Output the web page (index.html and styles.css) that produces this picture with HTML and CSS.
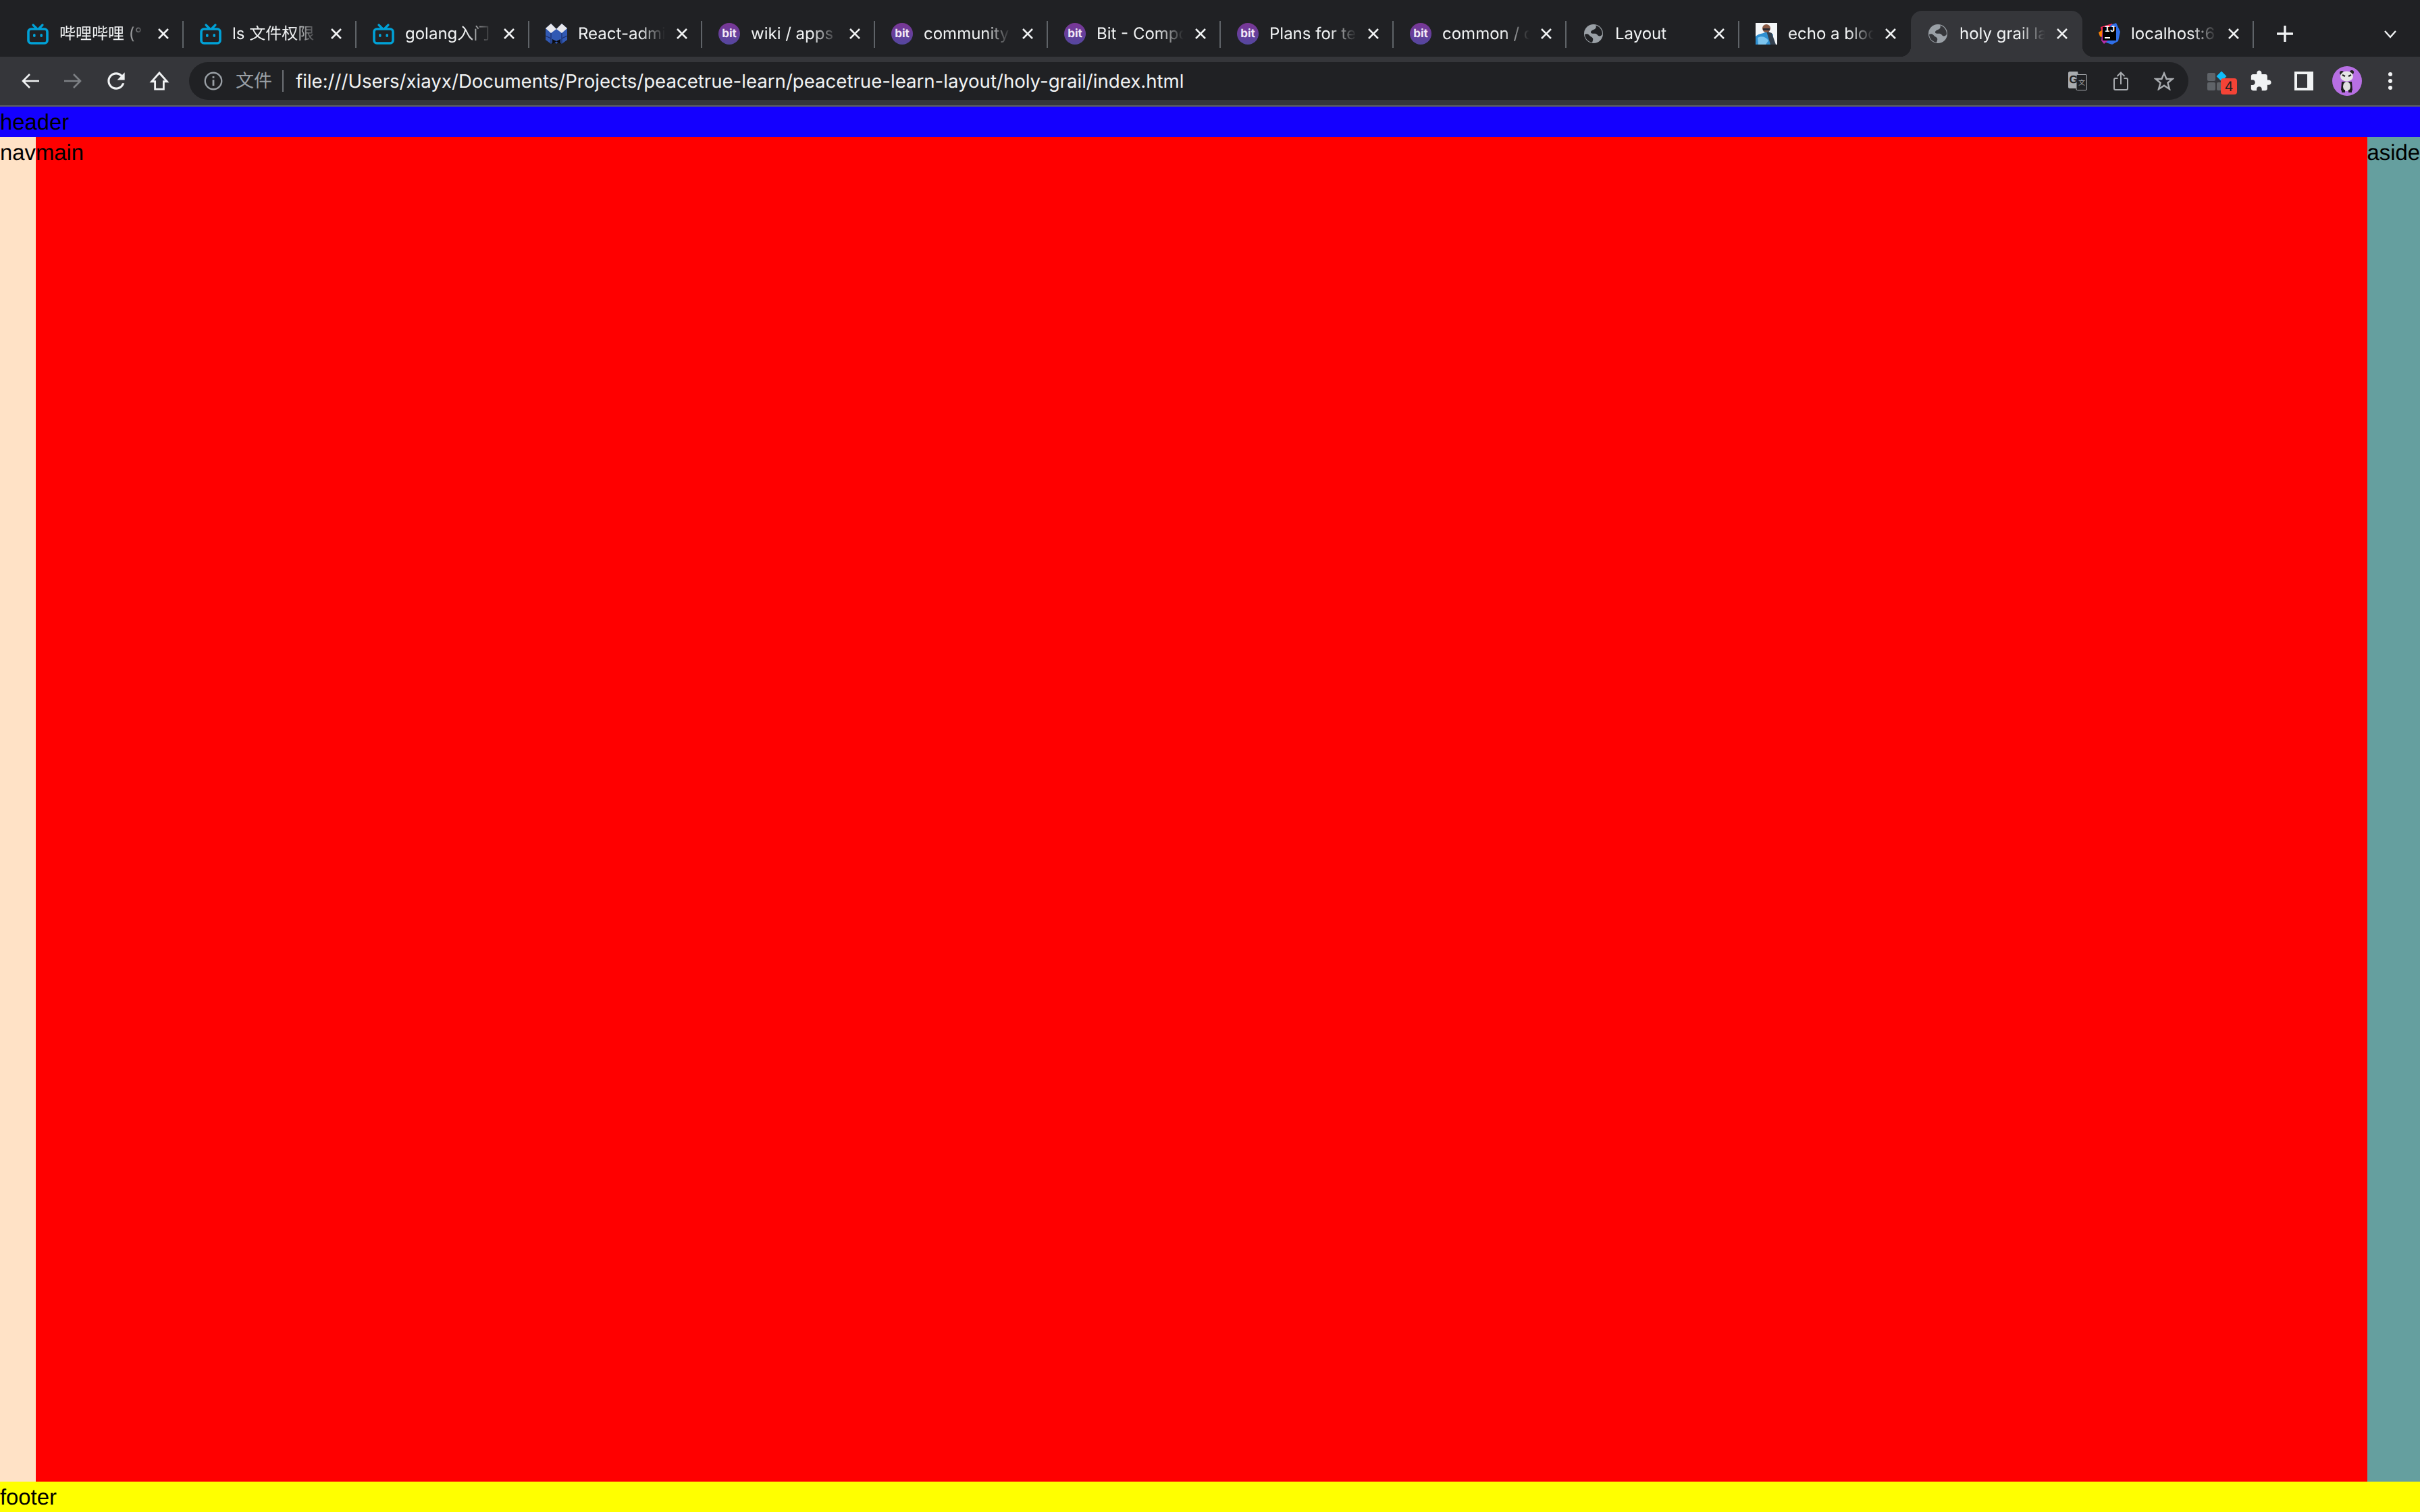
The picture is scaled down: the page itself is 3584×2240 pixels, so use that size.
FILE: index.html
```html
<!DOCTYPE html>
<html>
<head>
    <meta charset="utf-8" />
    <title>holy grail layout</title>
    <link rel="stylesheet" href="styles.css">
</head>
<body>
    <!-- 图标定义 -->
    <svg class="icon-defs" aria-hidden="true">
        <symbol id="iconClose" viewBox="0 0 20 20">
            <path d="M3 3L17 17M17 3L3 17" fill="none" stroke="currentColor" stroke-width="2.6"/>
        </symbol>
        <symbol id="iconBili" viewBox="0 0 32 32">
            <path d="M9 3L14 8M23 3L18 8" fill="none" stroke="#00a1d6" stroke-width="3.2" stroke-linecap="round"/>
            <rect x="2" y="9" width="28" height="21" rx="4" fill="none" stroke="#00a1d6" stroke-width="3.6"/>
            <rect x="9" y="16" width="3.6" height="5" rx="1.8" fill="#00a1d6"/>
            <rect x="19.4" y="16" width="3.6" height="5" rx="1.8" fill="#00a1d6"/>
        </symbol>
        <symbol id="iconGlobe" viewBox="0 0 28 28">
            <circle cx="14" cy="14" r="14" fill="#9aa0a6"/>
            <path d="M17 1.5C19 4 17 7 14 8C11 9 9 11 10.5 13C12 14.6 15 13 17.5 14C20 15 20.5 17.5 23 17.5C25 17.5 26.5 16 27 14.5C27 8 23 3 17 1.5Z" fill="currentColor"/>
            <path d="M1 15C3 13.5 6 14 7.5 16C9 18 11 18.5 12.5 20C14 21.5 13 24.5 12 27C6 26 1.5 21 1 15Z" fill="currentColor"/>
        </symbol>
    </svg>

    <div class="browser-chrome">
        <!-- 标签栏 -->
        <div class="tab-strip">
            <div class="tab">
                <svg class="favicon"><use href="#iconBili"/></svg>
                <span class="tab-title">哔哩哔哩 (°</span>
                <svg class="tab-close"><use href="#iconClose"/></svg>
            </div>
            <div class="tab">
                <svg class="favicon"><use href="#iconBili"/></svg>
                <span class="tab-title">ls 文件权限</span>
                <svg class="tab-close"><use href="#iconClose"/></svg>
            </div>
            <div class="tab">
                <svg class="favicon"><use href="#iconBili"/></svg>
                <span class="tab-title">golang入门</span>
                <svg class="tab-close"><use href="#iconClose"/></svg>
            </div>
            <div class="tab">
                <svg class="favicon" viewBox="0 0 32 32">
                    <path d="M0 8L8 1L16 9L24 1L32 8L32 25L24 31L20 27L16 31L12 27L8 31L0 25Z" fill="#3159b3"/>
                    <path d="M0 8L8 1L16 9L24 1L32 8L24 15L16 9L8 15Z" fill="#e8e8ec"/>
                    <path d="M8 15V31M24 15V31M0 19L8 23M32 19L24 23" stroke="#1c2f6c" stroke-width="1.2" fill="none"/>
                    <path d="M10 24L16 27L22 24V31L16 27.5L10 31Z" fill="#0b0b10"/>
                </svg>
                <span class="tab-title">React-admi</span>
                <svg class="tab-close"><use href="#iconClose"/></svg>
            </div>
            <div class="tab">
                <span class="favicon bit-icon">bit</span>
                <span class="tab-title">wiki / apps</span>
                <svg class="tab-close"><use href="#iconClose"/></svg>
            </div>
            <div class="tab">
                <span class="favicon bit-icon">bit</span>
                <span class="tab-title">community</span>
                <svg class="tab-close"><use href="#iconClose"/></svg>
            </div>
            <div class="tab">
                <span class="favicon bit-icon">bit</span>
                <span class="tab-title">Bit - Compo</span>
                <svg class="tab-close"><use href="#iconClose"/></svg>
            </div>
            <div class="tab">
                <span class="favicon bit-icon">bit</span>
                <span class="tab-title">Plans for te</span>
                <svg class="tab-close"><use href="#iconClose"/></svg>
            </div>
            <div class="tab">
                <span class="favicon bit-icon">bit</span>
                <span class="tab-title">common / c</span>
                <svg class="tab-close"><use href="#iconClose"/></svg>
            </div>
            <div class="tab">
                <svg class="favicon favicon-globe"><use href="#iconGlobe"/></svg>
                <span class="tab-title">Layout</span>
                <svg class="tab-close"><use href="#iconClose"/></svg>
            </div>
            <div class="tab tab-narrow tab-no-sep">
                <svg class="favicon" viewBox="0 0 32 32">
                    <rect width="32" height="32" fill="#f4f6f8"/>
                    <path d="M0 20C6 14 12 17 16 12L26 17L24 32H0Z" fill="#2f8fd0"/>
                    <path d="M3 22C8 19 15 20 19 26L15 32H4Z" fill="#7cc4ee"/>
                    <path d="M16 12L24 15L30 32H22Z" fill="#33404f"/>
                    <circle cx="16" cy="8" r="6" fill="#8a5a44"/>
                    <path d="M11 8H21V11H11Z" fill="#2b2b33"/>
                </svg>
                <span class="tab-title">echo a bloc</span>
                <svg class="tab-close"><use href="#iconClose"/></svg>
            </div>
            <div class="tab tab-narrow tab-active">
                <svg class="favicon favicon-globe"><use href="#iconGlobe"/></svg>
                <span class="tab-title">holy grail la</span>
                <svg class="tab-close"><use href="#iconClose"/></svg>
            </div>
            <div class="tab tab-narrow">
                <svg class="favicon" viewBox="0 0 32 32">
                    <path d="M3 6L20 1L24 10L8 28Z" fill="#fe2857"/>
                    <path d="M0 14L6 10L8 22L2 20Z" fill="#ff8100"/>
                    <path d="M18 3L26 0L32 13L29 27L20 32L8 28Z" fill="#2f6fe8"/>
                    <path d="M4 26L6 8L14 26L8 31Z" fill="#b62ea8"/>
                    <rect x="6" y="6" width="20" height="20" fill="#000"/>
                    <rect x="9" y="21" width="8" height="2" fill="#fff"/>
                </svg>
                <span class="ij-mark">IJ</span>
                <span class="tab-title">localhost:6</span>
                <svg class="tab-close"><use href="#iconClose"/></svg>
            </div>
            <svg class="new-tab" viewBox="0 0 24 24">
                <path d="M12 1V23M1 12H23" fill="none" stroke="#f1f3f4" stroke-width="3.4" stroke-linecap="round"/>
            </svg>
            <svg class="tab-search" viewBox="0 0 24 24">
                <path d="M4 8L12 17L20 8" fill="none" stroke="#f1f3f4" stroke-width="2.4"/>
            </svg>
        </div>

        <!-- 地址栏 -->
        <div class="toolbar">
            <div class="tool-btn">
                <svg class="nav-arrow" viewBox="0 0 27 24"><path d="M27 12H3M13 2L3 12L13 22" fill="none" stroke="#f1f3f4" stroke-width="2.6"/></svg>
            </div>
            <div class="tool-btn">
                <svg class="nav-arrow" viewBox="0 0 27 24"><path d="M0 12H24M14 2L24 12L14 22" fill="none" stroke="#7d8084" stroke-width="2.6"/></svg>
            </div>
            <div class="tool-btn">
                <svg class="reload-icon" viewBox="0 0 24 24"><path d="M17.65 6.35C16.2 4.9 14.21 4 12 4c-4.42 0-7.99 3.58-7.99 8s3.57 8 7.99 8c3.73 0 6.84-2.55 7.73-6h-2.08c-.82 2.33-3.04 4-5.65 4-3.31 0-6-2.69-6-6s2.69-6 6-6c1.66 0 3.14.69 4.22 1.78L13 11h7V4l-2.35 2.35z" fill="#f1f3f4"/></svg>
            </div>
            <div class="tool-btn">
                <svg class="tool-icon" viewBox="0 0 24 24"><path d="M12 3.5L4 12.5H7.5V20.5H16.5V12.5H20Z" fill="none" stroke="#f1f3f4" stroke-width="2" stroke-linejoin="miter"/></svg>
            </div>

            <div class="omnibox">
                <svg class="info-icon" viewBox="0 0 24 24">
                    <circle cx="12" cy="12" r="10.5" fill="none" stroke="#9aa0a6" stroke-width="2"/>
                    <path d="M12 10.5V18M12 6V8.4" stroke="#9aa0a6" stroke-width="2.4"/>
                </svg>
                <span class="scheme-chip">文件</span>
                <span class="url-text">file:///Users/xiayx/Documents/Projects/peacetrue-learn/peacetrue-learn-layout/holy-grail/index.html</span>
                <svg class="omni-icon omni-translate" viewBox="0 0 28 28">
                    <path d="M0 2C0 1 1 0 2 0H14L19 25H2C1 25 0 24 0 23Z" fill="#a9acb0"/>
                    <rect x="12" y="4.5" width="15.5" height="23" rx="1.5" fill="#202124" stroke="#a9acb0" stroke-width="1"/>
                    <text class="translate-g" x="1.5" y="17">G</text>
                    <text class="translate-x" x="15" y="20">文</text>
                </svg>
                <svg class="omni-icon omni-share" viewBox="0 0 22 28">
                    <path d="M6.5 10H3C2 10 1 11 1 12V25C1 26 2 27 3 27H19C20 27 21 26 21 25V12C21 11 20 10 19 10H15.5" fill="none" stroke="#a9acb0" stroke-width="2"/>
                    <path d="M11 19V2M5.5 7L11 1.5L16.5 7" fill="none" stroke="#a9acb0" stroke-width="2"/>
                </svg>
                <svg class="omni-icon omni-star" viewBox="0 0 30 28">
                    <path d="M15 2.5L18.6 11H27.5L20.4 16.8L23 26L15 20.8L7 26L9.6 16.8L2.5 11H11.4Z" fill="none" stroke="#a9acb0" stroke-width="2.4"/>
                </svg>
            </div>

            <div class="tool-btn ext-btn">
                <svg class="ext-icon" viewBox="0 0 36 32">
                    <rect x="3" y="4" width="12" height="12" rx="2" fill="#5f6368"/>
                    <rect x="3" y="18" width="12" height="12" rx="2" fill="#5f6368"/>
                    <rect x="17" y="18" width="12" height="12" rx="2" fill="#5f6368"/>
                    <path d="M24 1.5L31.5 9L24 16.5L16.5 9Z" fill="#0fbcf9"/>
                </svg>
                <span class="ext-badge">4</span>
            </div>
            <div class="tool-btn">
                <svg class="tool-icon" viewBox="0 0 24 24"><path d="M20.5 11H19V7c0-1.1-.9-2-2-2h-4V3.5C13 2.12 11.88 1 10.5 1S8 2.12 8 3.5V5H4c-1.1 0-1.99.9-1.99 2v3.8H3.5c1.49 0 2.7 1.21 2.7 2.7s-1.21 2.7-2.7 2.7H2V20c0 1.1.9 2 2 2h3.8v-1.5c0-1.49 1.21-2.7 2.7-2.7 1.49 0 2.7 1.21 2.7 2.7V22H17c1.1 0 2-.9 2-2v-4h1.5c1.38 0 2.5-1.12 2.5-2.5S21.88 11 20.5 11z" fill="#f1f3f4"/></svg>
            </div>
            <div class="tool-btn">
                <div class="side-panel"><div class="side-panel-inner"></div></div>
            </div>
            <div class="tool-btn">
                <svg class="avatar" viewBox="0 0 44 44">
                    <circle cx="22" cy="22" r="22" fill="#b76fe3"/>
                    <circle cx="14" cy="10" r="3" fill="#222"/>
                    <circle cx="29" cy="9" r="3" fill="#222"/>
                    <ellipse cx="21.5" cy="15" rx="9.5" ry="7.5" fill="#e6e6e6"/>
                    <path d="M15 13L19 15M28 13L24 15" stroke="#222" stroke-width="2.4"/>
                    <path d="M14 23H29L30 36H13Z" fill="#1d1d20"/>
                    <ellipse cx="21.5" cy="30" rx="5.5" ry="7" fill="#e0e0e0"/>
                    <path d="M14 35H19V39H14ZM24 35H29V39H24Z" fill="#1d1d20"/>
                </svg>
            </div>
            <div class="tool-btn">
                <svg class="menu-dots" viewBox="0 0 8 28">
                    <circle cx="4" cy="4" r="3" fill="#f1f3f4"/>
                    <circle cx="4" cy="14" r="3" fill="#f1f3f4"/>
                    <circle cx="4" cy="24" r="3" fill="#f1f3f4"/>
                </svg>
            </div>
        </div>
    </div>

    <!-- 页面内容 -->
    <div class="page">
        <header class="page-header">header</header>
        <div class="page-body">
            <nav class="page-nav">nav</nav>
            <main class="page-main">main</main>
            <aside class="page-aside">aside</aside>
        </div>
        <footer class="page-footer">footer</footer>
    </div>
</body>
</html>
```

FILE: styles.css
```css
/* 全局样式 */
html,
body {
    height: 100%;
}

body {
    display: flex;
    flex-direction: column;
    margin: 0;
    background-color: #fff;
    font-family: "Liberation Sans", Arial, sans-serif;
    color: #000;
    text-rendering: geometricPrecision;
}

.icon-defs {
    display: none;
}

/* 浏览器外框 */
.browser-chrome {
    flex-shrink: 0;
    font-family: Inter, "Noto Sans CJK SC", sans-serif;
    color: #f1f3f4;
}

/* 标签栏 */
.tab-strip {
    display: flex;
    align-items: stretch;
    height: 68px;
    padding: 16px 0 0 16px;
    background-color: #202124;
}

.tab {
    position: relative;
    display: flex;
    align-items: center;
    flex-shrink: 0;
    width: 256px;
    padding: 0 20px 0 24px;
    box-sizing: border-box;
}

.tab-narrow {
    width: 254px;
}

/* 标签之间的分隔线 */
.tab::after {
    content: "";
    position: absolute;
    top: 15px;
    right: 0;
    width: 2px;
    height: 40px;
    background-color: #5f6368;
}

.tab-no-sep::after {
    display: none;
}

/* 当前标签 */
.tab-active {
    border-radius: 16px 16px 0 0;
    background-color: #35363a;
}

.tab-active::before,
.tab-active::after {
    content: "";
    position: absolute;
    top: auto;
    bottom: 0;
    width: 16px;
    height: 16px;
    background-color: transparent;
}

.tab-active::before {
    left: -16px;
    background: radial-gradient(circle at 0 0, transparent 16px, #35363a 16.5px);
}

.tab-active::after {
    right: -16px;
    background: radial-gradient(circle at 100% 0, transparent 16px, #35363a 16.5px);
}

.favicon {
    display: block;
    flex-shrink: 0;
    width: 32px;
    height: 32px;
    margin-right: 16px;
}

.favicon-globe {
    width: 28px;
    height: 28px;
    margin-left: 2px;
    margin-right: 18px;
    color: #202124;
}

.tab-active .favicon-globe {
    color: #35363a;
}

/* bit 圆形图标 */
.bit-icon {
    display: flex;
    align-items: center;
    justify-content: center;
    border-radius: 50%;
    background: linear-gradient(#7a3696, #54479f);
    font-size: 17px;
    font-weight: 700;
    color: #f1e9f6;
}

.ij-mark {
    position: absolute;
    top: 21px;
    left: 33px;
    font-family: "Liberation Mono", monospace;
    font-size: 13px;
    font-weight: 700;
    line-height: 13px;
    color: #fff;
}

.tab-title {
    flex: 1;
    min-width: 0;
    margin-right: 15px;
    overflow: hidden;
    white-space: nowrap;
    font-size: 24px;
    line-height: 36px;
    -webkit-mask-image: linear-gradient(to right, #000 70%, transparent 100%);
    mask-image: linear-gradient(to right, #000 70%, transparent 100%);
}

.tab-close {
    flex-shrink: 0;
    width: 20px;
    height: 20px;
    color: #f1f3f4;
}

.new-tab {
    flex-shrink: 0;
    width: 24px;
    height: 24px;
    margin: 22px 0 0 34px;
}

.tab-search {
    flex-shrink: 0;
    width: 24px;
    height: 24px;
    margin: 22px 32px 0 auto;
}

/* 地址栏 */
.toolbar {
    display: flex;
    align-items: center;
    height: 72px;
    padding: 0 12px;
    border-bottom: 2px solid #5f6063;
    background-color: #35363a;
}

.tool-btn {
    position: relative;
    display: flex;
    align-items: center;
    justify-content: center;
    flex-shrink: 0;
    width: 64px;
    height: 56px;
}

.tool-icon {
    display: block;
    width: 34px;
    height: 34px;
}

.nav-arrow {
    display: block;
    width: 27px;
    height: 24px;
}

.reload-icon {
    display: block;
    width: 38px;
    height: 38px;
}

.omnibox {
    display: flex;
    align-items: center;
    flex: 1;
    height: 56px;
    margin: 0 11px 0 12px;
    padding: 0 21px 0 22px;
    border-radius: 28px;
    background-color: #202124;
}

.info-icon {
    flex-shrink: 0;
    width: 28px;
    height: 28px;
    margin-right: 19px;
}

.scheme-chip {
    padding-right: 15px;
    border-right: 2px solid #6d7075;
    font-size: 27px;
    line-height: 32px;
    color: #9aa0a6;
}

.url-text {
    flex: 1;
    min-width: 0;
    margin-left: 18px;
    white-space: nowrap;
    font-size: 27.6px;
    color: #f1f3f4;
}

.omni-icon {
    flex-shrink: 0;
    height: 28px;
}

.omni-translate {
    width: 28px;
}

.omni-share {
    width: 22px;
    margin-left: 39px;
}

.omni-star {
    width: 30px;
    margin-left: 38px;
}

.translate-g {
    font-family: "Liberation Sans", sans-serif;
    font-size: 16px;
    font-weight: 700;
    fill: #202124;
}

.translate-x {
    font-family: "Noto Sans CJK SC", sans-serif;
    font-size: 10px;
    fill: #a9acb0;
}

/* 扩展图标和角标 */
.ext-icon {
    display: block;
    width: 36px;
    height: 32px;
}

.ext-badge {
    position: absolute;
    top: 24px;
    left: 37px;
    width: 24px;
    height: 24px;
    border-radius: 4px;
    background-color: #f44336;
    font-size: 20px;
    line-height: 25px;
    text-align: center;
    color: #202124;
}

.side-panel {
    width: 28px;
    height: 28px;
    padding: 4px 0 0 4px;
    box-sizing: border-box;
    background-color: #f1f3f4;
}

.side-panel-inner {
    width: 15px;
    height: 20px;
    background-color: #35363a;
}

.avatar {
    display: block;
    width: 44px;
    height: 44px;
}

.menu-dots {
    display: block;
    width: 8px;
    height: 28px;
}

/* 圣杯布局 */
.page {
    display: flex;
    flex-direction: column;
    flex: 1;
    min-height: 0;
    font-size: 32.8px;
    line-height: 45px;
}

.page-header {
    background-color: #1400ff;
}

.page-body {
    display: flex;
    flex: 1;
}

.page-nav {
    background-color: #ffe2c6;
}

.page-main {
    flex: 1;
    background-color: #ff0000;
}

.page-aside {
    background-color: #659f9f;
}

.page-footer {
    background-color: #ffff00;
}
```
